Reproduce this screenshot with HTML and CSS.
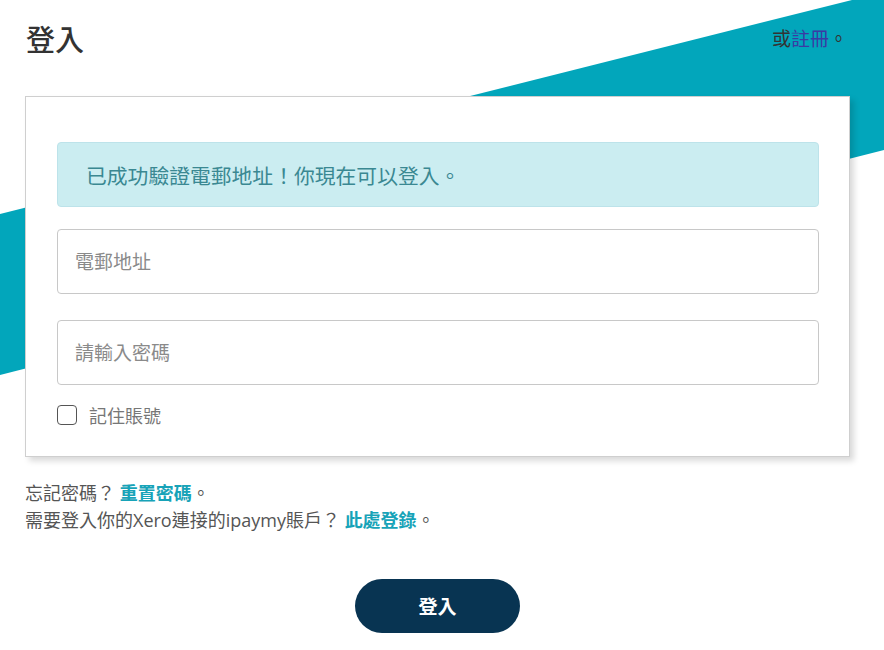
FILE: index.html
```html
<!DOCTYPE html>
<html lang="zh-Hant">
<head>
    <meta charset="UTF-8">
    <meta name="viewport" content="width=device-width, initial-scale=1.0">
    <title>登入</title>
    <link rel="stylesheet" href="styles.css">
</head>
<body>
    <div class="stripe"></div>
    <div class="page">
        <div class="header">
            <h1>登入</h1>
            <p class="signup">或<a href="#">註冊</a>。</p>
        </div>

        <form class="card">
            <div class="alert">已成功驗證電郵地址！你現在可以登入。</div>
            <input class="field" type="email" placeholder="電郵地址">
            <input class="field" type="password" placeholder="請輸入密碼">
            <label class="remember">
                <input type="checkbox">
                <span>記住賬號</span>
            </label>
        </form>

        <div class="help">
            <p>忘記密碼？ <a href="#">重置密碼</a>。</p>
            <p>需要登入你的Xero連接的ipaymy賬戶？ <a href="#">此處登錄</a>。</p>
        </div>

        <div class="actions">
            <button class="button" type="button">登入</button>
        </div>
    </div>
</body>
</html>
```

FILE: styles.css
```css
body {
    font-family: 'Open Sans', 'Noto Sans CJK TC', sans-serif;
    color: #333;
    background: #fff;
    margin: 0;
    padding: 0;
    position: relative;
    min-height: 650px;
    overflow: hidden;
}

/* teal band behind the card */
.stripe {
    position: absolute;
    top: 0;
    left: 0;
    width: 100%;
    height: 380px;
    background: #02a6bb;
    clip-path: polygon(0 214px, 852px 0, 100% 0, 100% 150px, 0 375px);
    z-index: 0;
}

.page {
    position: relative;
    z-index: 1;
    width: 825px;
    margin-left: 25px;
}

.header {
    display: flex;
    justify-content: space-between;
    align-items: center;
    height: 80px;
    padding: 0 2px 0 1px;
    margin-bottom: 16px;
}

.header h1 {
    margin: 0;
    font-size: 29px;
    font-weight: 500;
    line-height: 40px;
    color: #333;
}

.signup {
    margin: 0 0 4px;
    font-size: 19px;
    color: #333;
}

.signup a {
    color: #3b3aa4;
    text-decoration: none;
}

.card {
    display: flex;
    flex-direction: column;
    box-sizing: border-box;
    height: 361px;
    padding: 45px 30px 0 31px;
    background: #fff;
    border: 1px solid #cfcfcf;
    box-shadow: 4px 4px 6px rgba(0, 0, 0, 0.15);
}

.alert {
    box-sizing: border-box;
    height: 65px;
    padding: 0 28px;
    display: flex;
    align-items: center;
    background: #cbedf1;
    border: 1px solid #bde3ea;
    border-radius: 4px;
    color: #3a8892;
    font-size: 20.8px;
}

.field {
    box-sizing: border-box;
    height: 65px;
    margin-top: 22px;
    padding: 0 17px;
    border: 1px solid #c8c8c8;
    border-radius: 4px;
    font-family: inherit;
    font-size: 19px;
    color: #333;
    outline: none;
}

.field + .field {
    margin-top: 26px;
}

.field::placeholder {
    color: #8a8a8a;
}

.remember {
    display: flex;
    align-items: center;
    gap: 12px;
    margin-top: 17px;
    font-size: 18px;
    color: #777;
}

.remember input {
    appearance: none;
    width: 20px;
    height: 20px;
    margin: 0;
    border: 1.5px solid #555;
    border-radius: 4px;
    background: #fff;
}

.help {
    margin-top: 23px;
    font-size: 18px;
    color: #555;
}

.help p {
    margin: 0;
    line-height: 27px;
}

.help a {
    color: #17a3b8;
    font-weight: 700;
    text-decoration: none;
}

.actions {
    display: flex;
    justify-content: center;
    margin-top: 45px;
}

.button {
    width: 165px;
    height: 54px;
    border: none;
    border-radius: 27px;
    background: #083452;
    color: #fff;
    font-family: inherit;
    font-size: 19px;
    font-weight: 700;
    cursor: pointer;
}
```
